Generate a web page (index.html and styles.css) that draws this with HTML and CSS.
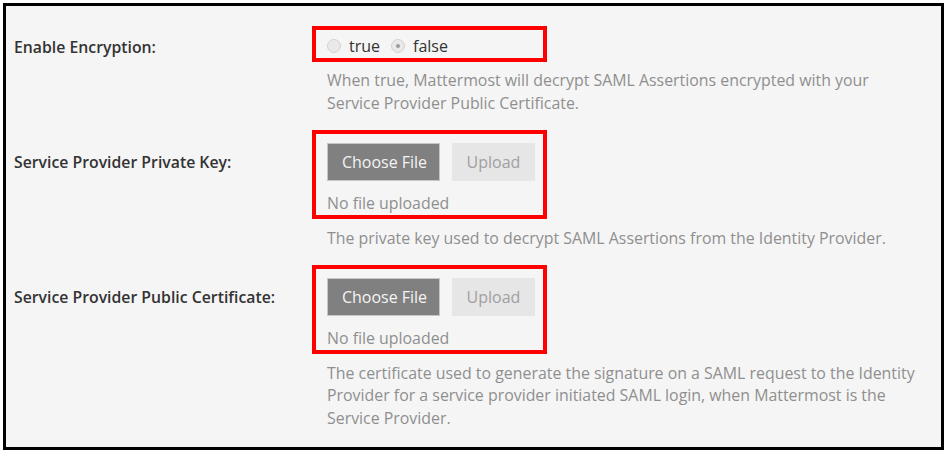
FILE: index.html
```html
<!DOCTYPE html>
<html lang="en">
<head>
<meta charset="utf-8">
<title>SAML Encryption Settings</title>
<link rel="stylesheet" href="styles.css">
</head>
<body>
<div class="panel">
  <div class="row">
    <div class="label">Enable Encryption:</div>
    <div class="control">
      <div class="annot annot-radio">
        <label class="radio"><span class="dot"></span><span class="radio-text">true</span></label>
        <label class="radio"><span class="dot checked"></span><span class="radio-text">false</span></label>
      </div>
      <div class="help help-first">When true, Mattermost will decrypt SAML Assertions encrypted with your Service Provider Public Certificate.</div>
    </div>
  </div>
  <div class="row">
    <div class="label">Service Provider Private Key:</div>
    <div class="control">
      <div class="annot annot-file">
        <div class="buttons">
          <span class="btn btn-choose">Choose File</span>
          <span class="btn btn-upload">Upload</span>
        </div>
        <div class="status">No file uploaded</div>
      </div>
      <div class="help">The private key used to decrypt SAML Assertions from the Identity Provider.</div>
    </div>
  </div>
  <div class="row">
    <div class="label">Service Provider Public Certificate:</div>
    <div class="control">
      <div class="annot annot-file">
        <div class="buttons">
          <span class="btn btn-choose">Choose File</span>
          <span class="btn btn-upload">Upload</span>
        </div>
        <div class="status">No file uploaded</div>
      </div>
      <div class="help">The certificate used to generate the signature on a SAML request to the Identity Provider for a service provider initiated SAML login, when Mattermost is the Service Provider.</div>
    </div>
  </div>
</div>
</body>
</html>
```

FILE: styles.css
```css
html, body {
  margin: 0;
  padding: 0;
  background: #ffffff;
}

body {
  font-family: "Open Sans", "Noto Sans", sans-serif;
  font-size: 16px;
  color: #333333;
}

.panel {
  box-sizing: border-box;
  width: 941px;
  margin: 3px 0 0 3px;
  border: 3px solid #000000;
  background: #f5f5f5;
  padding: 20px 0 18px 0;
}

.row {
  display: flex;
  align-items: baseline;
  margin-bottom: 16px;
}

.row:last-child {
  margin-bottom: 0;
}

.label {
  box-sizing: border-box;
  width: 306px;
  flex: none;
  padding-left: 8px;
  font-weight: 600;
  font-size: 15.8px;
  color: #333333;
}

.control {
  flex: 1;
}

.annot {
  box-sizing: border-box;
  width: 235px;
  border: 4px solid #ff0000;
  padding-left: 11px;
}

.annot-radio {
  display: flex;
  align-items: center;
  padding-top: 4px;
  height: 36px;
  line-height: 24px;
}

.annot-file {
  padding-top: 9px;
}

.radio {
  display: flex;
  align-items: center;
  color: #333333;
}

.radio + .radio {
  margin-left: 11px;
}

.dot {
  box-sizing: border-box;
  width: 14px;
  height: 14px;
  border-radius: 50%;
  border: 1px solid #d2d2d2;
  background: #e9e9e9;
  margin-right: 8px;
  display: flex;
  align-items: center;
  justify-content: center;
}

.dot.checked::after {
  content: "";
  width: 4px;
  height: 4px;
  border-radius: 50%;
  background: #9a9a9a;
}

.buttons {
  display: flex;
  gap: 12px;
}

.btn {
  box-sizing: border-box;
  height: 38px;
  display: flex;
  align-items: center;
  justify-content: center;
  font-size: 16px;
}

.btn-choose {
  width: 113px;
  background: #808080;
  border: 1px solid #c6c6c6;
  color: #f4f4f4;
  padding-left: 2px;
}

.btn-upload {
  width: 83px;
  background: #e6e6e6;
  color: #a0a0a0;
}

.status {
  margin-top: 11px;
  line-height: 22.5px;
  font-size: 15.9px;
  color: #8f8f8f;
}

.help {
  margin-top: 8px;
  padding-left: 15px;
  width: 595px;
  line-height: 22.5px;
  font-size: 15.9px;
  color: #8f8f8f;
}

.help-first {
  margin-top: 7px;
}
```
